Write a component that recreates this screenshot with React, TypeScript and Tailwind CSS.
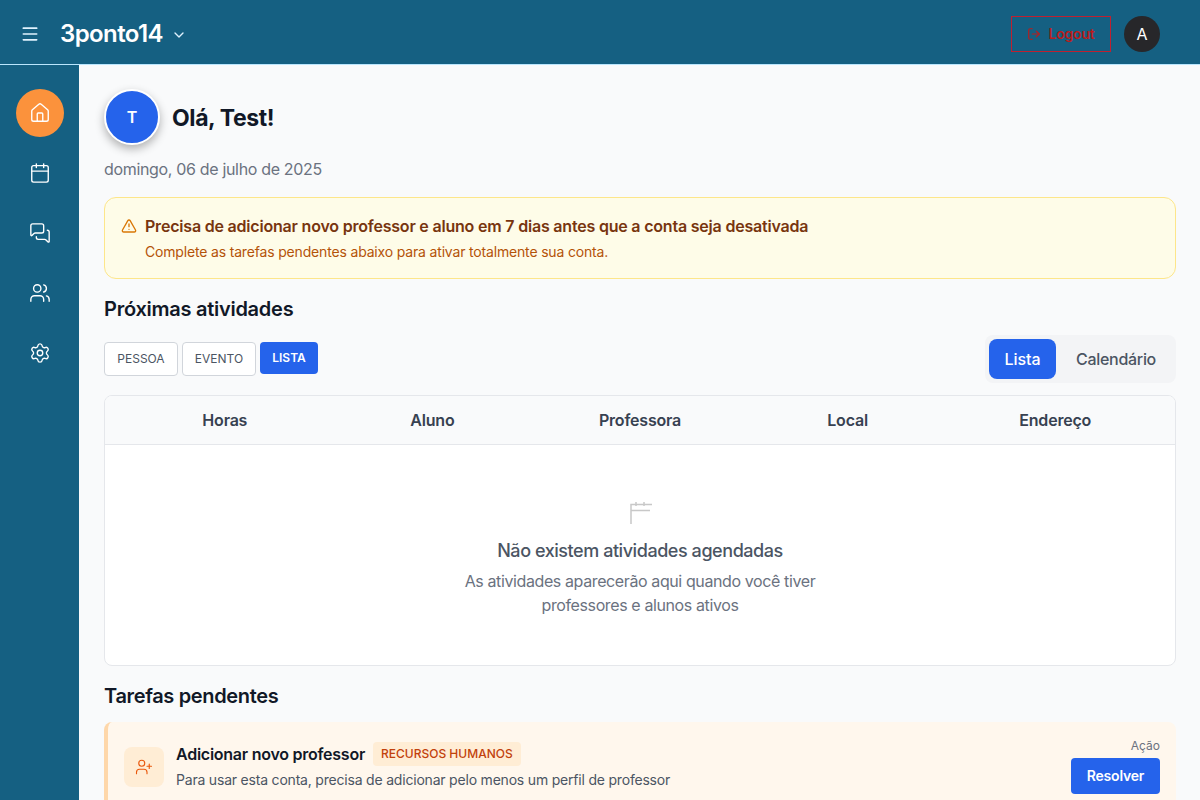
import { Menu, ChevronDown, LogOut, Home, Calendar, MessagesSquare, Users, Settings, TriangleAlert, UserPlus } from "lucide-react";

const navItems = [Calendar, MessagesSquare, Users, Settings];
const columns = ["Horas", "Aluno", "Professora", "Local", "Endereço"];

const App = () => {
  return (
    <div className="h-screen overflow-hidden flex flex-col bg-[#f9fafb] font-['Inter',sans-serif]">
      {/* Header */}
      <header className="h-[65px] shrink-0 flex items-center justify-between bg-[#156082] border-b border-[#bae6fd] pt-1 pl-[20px] pr-[40px]">
        <div className="flex items-center">
          <Menu className="w-5 h-5 text-[#e0f2fe]" />
          <span className="ml-[20px] text-2xl font-semibold tracking-[-0.6px] text-white">3ponto14</span>
          <ChevronDown className="ml-[8px] mt-[2px] w-4 h-4 text-[#e0f2fe]" />
        </div>
        <div className="flex items-center gap-[13px]">
          <button className="w-[100px] h-[36px] flex items-center justify-center gap-[7px] border border-[#c02030] text-[#b91c1c] text-sm font-semibold tracking-[-0.2px]">
            <LogOut className="w-3.5 h-3.5" />
            Logout
          </button>
          <div className="w-9 h-9 rounded-full bg-[#27272a] text-white flex items-center justify-center text-base">A</div>
        </div>
      </header>

      <div className="flex flex-1 min-h-0">
        {/* Sidebar */}
        <aside className="w-[79px] shrink-0 bg-[#156082] flex flex-col items-center gap-3 pt-[24px] pl-[1px]">
          <div className="w-12 h-12 rounded-full bg-[#fb923c] flex items-center justify-center">
            <Home className="w-[22px] h-[22px] text-white" strokeWidth={1.5} />
          </div>
          {navItems.map((Icon, i) => (
            <div key={i} className="w-12 h-12 flex items-center justify-center text-white">
              <Icon className="w-[22px] h-[22px]" strokeWidth={1.5} />
            </div>
          ))}
        </aside>

        {/* Content */}
        <main className="flex-1 min-w-0 pt-[24px] pl-[25px] pr-[24px]">
          <div className="flex items-center gap-3">
            <div className="w-14 h-14 rounded-full bg-[#2563eb] border-2 border-white shadow-[0_4px_10px_rgba(0,0,0,0.3)] flex items-center justify-center text-white font-semibold text-base">T</div>
            <h1 className="pt-[2px] text-[23px] font-bold tracking-[-0.4px] text-[#111827]">Olá, Test!</h1>
          </div>
          <p className="mt-[12px] text-base tracking-[-0.33px] text-[#6b7280]">domingo, 06 de julho de 2025</p>

          <div className="mt-[16px] h-[82px] flex gap-2 items-start rounded-xl border border-[#fde68a] bg-[#fefce8] pt-[16px] px-[16px]">
            <TriangleAlert className="w-4 h-4 mt-[4px] text-[#d97706]" />
            <div>
              <p className="text-base font-semibold leading-6 tracking-[-0.2px] text-[#78350f]">Precisa de adicionar novo professor e aluno em 7 dias antes que a conta seja desativada</p>
              <p className="mt-[4px] text-sm leading-5 tracking-[-0.17px] text-[#b45309]">Complete as tarefas pendentes abaixo para ativar totalmente sua conta.</p>
            </div>
          </div>

          <h2 className="mt-[16px] text-xl font-semibold leading-7 tracking-[-0.26px] text-[#111827]">Próximas atividades</h2>

          <div className="mt-[12px] flex items-start justify-between">
            <div className="flex gap-1 pt-[7px]">
              <button className="h-[34px] w-[74px] rounded-sm border border-[#d1d5db] bg-white text-xs font-normal text-[#4b5563]">PESSOA</button>
              <button className="h-[34px] w-[74px] rounded-sm border border-[#d1d5db] bg-white text-xs font-normal text-[#4b5563]">EVENTO</button>
              <button className="h-[32px] w-[58px] rounded-sm bg-[#2563eb] text-xs font-semibold text-white">LISTA</button>
            </div>
            <div className="h-[48px] flex items-center rounded-lg bg-[#f3f4f6] p-1">
              <button className="h-10 w-[67px] rounded-lg bg-[#2563eb] text-base font-medium text-white">Lista</button>
              <button className="h-10 pl-5 pr-4 text-base font-medium tracking-[-0.3px] text-[#4b5563]">Calendário</button>
            </div>
          </div>

          <div className="mt-[12px] h-[271px] rounded-lg border border-[#e5e7eb] bg-white overflow-hidden">
            <div className="h-[49px] grid grid-cols-5 items-center px-4 bg-[#f9fafb] border-b border-[#e5e7eb]">
              {columns.map((col) => (
                <div key={col} className="text-center text-base font-semibold tracking-[-0.2px] text-[#374151]">{col}</div>
              ))}
            </div>
            <div className="flex flex-col items-center pt-[56px]">
              <svg width="24" height="24" viewBox="0 0 24 24" fill="none" stroke="#c8c8c8" strokeWidth="1.5">
                <path d="M3 23V3.5H24M3 9.5H22M8 1v4M16 1v4" />
              </svg>
              <p className="mt-[12px] text-lg font-medium leading-7 tracking-[-0.44px] text-[#4b5563]">Não existem atividades agendadas</p>
              <p className="mt-[4px] w-[400px] text-center text-base leading-6 tracking-[-0.39px] text-[#6b7280]">As atividades aparecerão aqui quando você tiver professores e alunos ativos</p>
            </div>
          </div>

          <h2 className="mt-[16px] text-xl font-semibold leading-7 tracking-[-0.35px] text-[#111827]">Tarefas pendentes</h2>

          <div className="mt-[12px] h-[100px] flex items-start justify-between rounded-lg border-l-4 border-[#fed7aa] bg-[#fff7ed] pl-[16px] pr-[16px]">
            <div className="flex items-center gap-3 pt-[21px]">
              <div className="w-10 h-10 rounded-lg bg-[#ffedd5] flex items-center justify-center">
                <UserPlus className="w-[18px] h-[18px] text-[#ea580c]" strokeWidth={1.5} />
              </div>
              <div className="mt-[-1px]">
                <div className="flex items-center gap-2">
                  <span className="text-base font-semibold tracking-[-0.25px] text-[#111827]">Adicionar novo professor</span>
                  <span className="h-6 px-2 flex items-center rounded-sm bg-[#ffedd5] text-xs font-medium text-[#c2410c]">RECURSOS HUMANOS</span>
                </div>
                <p className="mt-[4px] text-sm tracking-[-0.2px] text-[#4b5563]">Para usar esta conta, precisa de adicionar pelo menos um perfil de professor</p>
              </div>
            </div>
            <div className="flex flex-col items-end pt-[16px]">
              <span className="text-xs text-[#6b7280]">Ação</span>
              <button className="mt-[4px] w-[89px] h-9 rounded bg-[#2563eb] text-sm font-semibold tracking-[-0.2px] text-white">Resolver</button>
            </div>
          </div>
        </main>
      </div>
    </div>
  );
};

export default App;
